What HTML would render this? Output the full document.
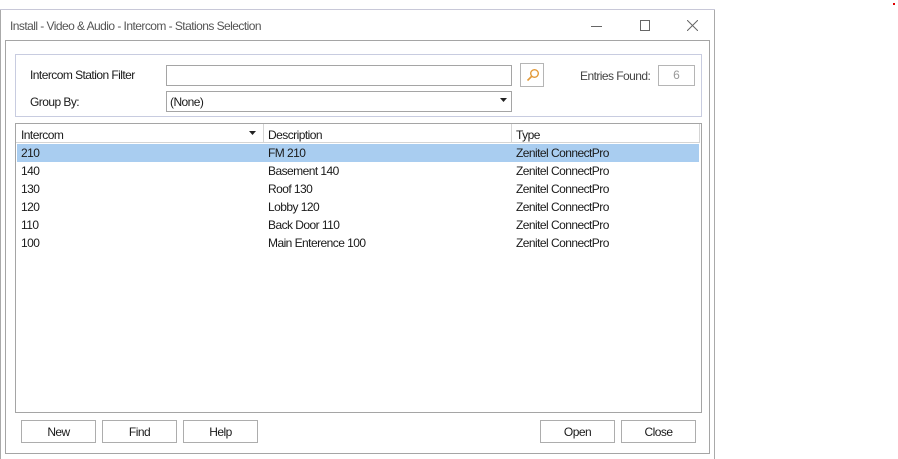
<!DOCTYPE html>
<html><head><style>
*{margin:0;padding:0;box-sizing:border-box}
body{width:898px;height:459px;background:#fff;position:relative;overflow:hidden;font-family:"Liberation Sans",sans-serif;font-size:12px;color:#1a1a1a}
.a{position:absolute}
.t{position:absolute;white-space:nowrap;letter-spacing:-0.55px}
.btn{position:absolute;top:420px;height:23px;border:1px solid #adadad;background:#fff;text-align:center;line-height:22px;font-size:12px;letter-spacing:-0.55px}
</style></head><body>
<div class="a" style="left:0;top:9px;width:715px;height:1px;background:#c8c8d8"></div>
<div class="a" style="left:0;top:10px;width:1px;height:449px;background:#aaa"></div>
<div class="a" style="left:714px;top:10px;width:1px;height:449px;background:#aaa"></div>
<div class="t" style="left:10px;top:19px;color:#555">Install - Video &amp; Audio - Intercom - Stations Selection</div>
<div class="a" style="left:591px;top:26px;width:11px;height:1px;background:#666"></div>
<div class="a" style="left:640px;top:20px;width:10px;height:11px;border:1px solid #666"></div>
<svg class="a" style="left:687px;top:20px" width="11" height="11"><path d="M0 0L11 11M11 0L0 11" stroke="#666" stroke-width="1"/></svg>
<div class="a" style="left:5px;top:40px;width:705px;height:414px;border:1px solid #a5a5a5"></div>
<div class="a" style="left:15px;top:54px;width:687px;height:63px;border:1px solid #c8cce0"></div>
<div class="t" style="left:30px;top:68px">Intercom Station Filter</div>
<div class="a" style="left:166px;top:65px;width:346px;height:21px;border:1px solid #a5a5a5;background:#fff"></div>
<div class="a" style="left:520px;top:63px;width:24px;height:24px;border:1px solid #b5b5b5"></div>
<svg class="a" style="left:526px;top:68px" width="14" height="14"><circle cx="8.5" cy="5.5" r="3.8" fill="none" stroke="#e39a3a" stroke-width="1.4"/><path d="M6 8L1.5 12.5" stroke="#e39a3a" stroke-width="1.6"/></svg>
<div class="t" style="left:580px;top:69px;color:#444">Entries Found:</div>
<div class="a" style="left:658px;top:65px;width:37px;height:21px;border:1px solid #b5b5b5;text-align:center;line-height:19px;color:#999">6</div>
<div class="t" style="left:30px;top:95px">Group By:</div>
<div class="a" style="left:166px;top:91px;width:346px;height:21px;border:1px solid #a5a5a5"></div>
<div class="t" style="left:170px;top:95px">(None)</div>
<svg class="a" style="left:500px;top:98px" width="7" height="4"><path d="M0 0H7L3.5 4Z" fill="#222"/></svg>
<div class="a" style="left:15px;top:123px;width:687px;height:290px;border:1px solid #a5a5a5"></div>
<div class="a" style="left:16px;top:124px;width:684px;height:19px;border-bottom:1px solid #d5d5d5;background:#fff"></div>
<div class="a" style="left:263px;top:124px;width:1px;height:19px;background:#d5d5d5"></div>
<div class="a" style="left:511px;top:124px;width:1px;height:19px;background:#d5d5d5"></div>
<div class="a" style="left:699px;top:124px;width:1px;height:19px;background:#d5d5d5"></div>
<div class="t" style="left:21px;top:128px">Intercom</div>
<svg class="a" style="left:249px;top:131px" width="7" height="4"><path d="M0 0H7L3.5 4Z" fill="#222"/></svg>
<div class="t" style="left:268px;top:128px">Description</div>
<div class="t" style="left:516px;top:128px">Type</div>
<div class="a" style="left:17px;top:144px;width:682px;height:18px;background:#a9cdf0"></div>
<div class="t" style="left:21px;top:146px">210</div><div class="t" style="left:268px;top:146px">FM 210</div><div class="t" style="left:516px;top:146px">Zenitel ConnectPro</div>
<div class="t" style="left:21px;top:164px">140</div><div class="t" style="left:268px;top:164px">Basement 140</div><div class="t" style="left:516px;top:164px">Zenitel ConnectPro</div>
<div class="t" style="left:21px;top:182px">130</div><div class="t" style="left:268px;top:182px">Roof 130</div><div class="t" style="left:516px;top:182px">Zenitel ConnectPro</div>
<div class="t" style="left:21px;top:200px">120</div><div class="t" style="left:268px;top:200px">Lobby 120</div><div class="t" style="left:516px;top:200px">Zenitel ConnectPro</div>
<div class="t" style="left:21px;top:218px">110</div><div class="t" style="left:268px;top:218px">Back Door 110</div><div class="t" style="left:516px;top:218px">Zenitel ConnectPro</div>
<div class="t" style="left:21px;top:236px">100</div><div class="t" style="left:268px;top:236px">Main Enterence 100</div><div class="t" style="left:516px;top:236px">Zenitel ConnectPro</div>
<div class="btn" style="left:21px;width:75px">New</div>
<div class="btn" style="left:102px;width:75px">Find</div>
<div class="btn" style="left:183px;width:75px">Help</div>
<div class="btn" style="left:540px;width:75px">Open</div>
<div class="btn" style="left:621px;width:75px">Close</div>
<div class="a" style="left:893px;top:3px;width:2px;height:2px;background:#d00"></div>
</body></html>
